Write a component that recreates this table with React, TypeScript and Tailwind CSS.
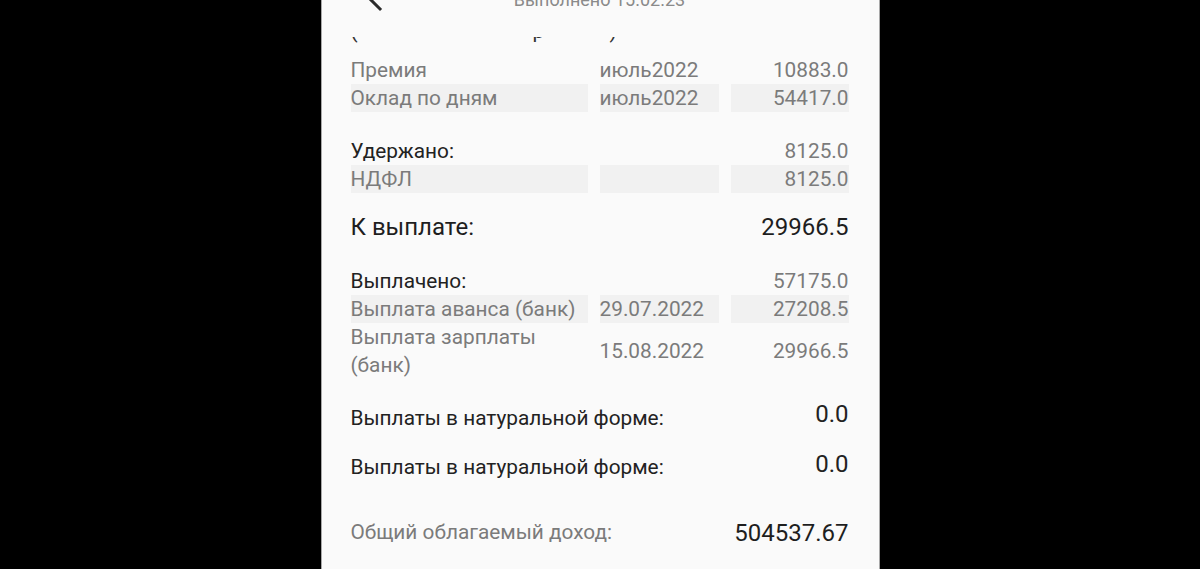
import React from "react";

type Row = {
  label: string;
  period?: string;
  value?: string;
  shaded?: boolean;
  strong?: boolean;
};

const earnings: Row[] = [
  { label: "Премия", period: "июль2022", value: "10883.0" },
  { label: "Оклад по дням", period: "июль2022", value: "54417.0", shaded: true },
];

const withheld: Row[] = [
  { label: "Удержано:", value: "8125.0", strong: true },
  { label: "НДФЛ", value: "8125.0", shaded: true },
];

const paid: Row[] = [
  { label: "Выплачено:", value: "57175.0", strong: true },
  { label: "Выплата аванса (банк)", period: "29.07.2022", value: "27208.5", shaded: true },
];

function TableRows({ rows }: { rows: Row[] }) {
  return (
    <div className="grid grid-cols-[237px_119px_1fr] gap-x-[12px] text-[20.8px] leading-[28px]">
      {rows.map((r) => {
        const cell = r.shaded ? "bg-[#f1f1f1]" : "";
        return (
          <React.Fragment key={r.label}>
            <div className={`${cell} ${r.strong ? "text-[#222222]" : "text-[#7b7b7b]"}`}>{r.label}</div>
            <div className={`${cell} text-[#7b7b7b]`}>{r.period ?? ""}</div>
            <div className={`${cell} text-right text-[#7b7b7b]`}>{r.value ?? ""}</div>
          </React.Fragment>
        );
      })}
    </div>
  );
}

export default function App() {
  return (
    <div className="flex h-[569px] w-full justify-center overflow-hidden bg-black font-['Roboto',sans-serif]">
      <div className="flex w-[559px] flex-col border-x border-[#a8a8a8] bg-[#fafafa] pl-[29px] pr-[30px]">
        {/* header, mostly scrolled off the top */}
        <div className="-mt-[15px] grid h-[28px] grid-cols-[1fr_auto_1fr] items-start text-[18px] leading-[28px]">
          <svg
            viewBox="0 0 24 24"
            className="-mt-[6px] ml-[11px] h-[36px] w-[36px]"
            fill="none"
            stroke="#2b2b2b"
            strokeWidth={2}
            strokeLinecap="square"
          >
            <path d="M12 4 L4 12 L12 20" />
            <path d="M4 12 H20" />
          </svg>
          <div className="pt-[1px] text-[#8a8a8a]">Выполнено 15.02.23</div>
          <div />
        </div>

        {/* clipped line under the header */}
        <div className="mt-[24px] h-[7px] overflow-hidden">
          <div className="-mt-[20px] flex text-[20.8px] leading-[28px] text-[#333333]">
            <span className="w-[182px]">(</span>
            <span className="w-[77px]">р</span>
            <span>)</span>
          </div>
        </div>

        <div className="mt-[12px]">
          <TableRows rows={earnings} />
        </div>

        <div className="mt-[25px]">
          <TableRows rows={withheld} />
        </div>

        <div className="mt-[18px] flex justify-between text-[24px] leading-[32px] text-[#1e1e1e]">
          <span>К выплате:</span>
          <span>29966.5</span>
        </div>

        <div className="mt-[24px]">
          <TableRows rows={paid} />
        </div>

        <div className="grid grid-cols-[237px_119px_1fr] items-center gap-x-[12px] text-[20.8px] leading-[28px] text-[#7b7b7b]">
          <div>Выплата зарплаты (банк)</div>
          <div>15.08.2022</div>
          <div className="text-right">29966.5</div>
        </div>

        <div className="mt-[19px] flex items-start justify-between text-[#222222]">
          <span className="mt-[6px] text-[20.8px] leading-[28px]">Выплаты в натуральной форме:</span>
          <span className="text-[24px] leading-[32px]">0.0</span>
        </div>

        <div className="mt-[16px] flex items-start justify-between text-[#222222]">
          <span className="mt-[5px] text-[20.8px] leading-[28px]">Выплаты в натуральной форме:</span>
          <span className="text-[24px] leading-[32px]">0.0</span>
        </div>

        <div className="mt-[36px] flex items-start justify-between">
          <span className="mt-[1px] text-[20.8px] leading-[28px] text-[#7b7b7b]">Общий облагаемый доход:</span>
          <span className="text-[24px] leading-[32px] text-[#1e1e1e]">504537.67</span>
        </div>
      </div>
    </div>
  );
}
